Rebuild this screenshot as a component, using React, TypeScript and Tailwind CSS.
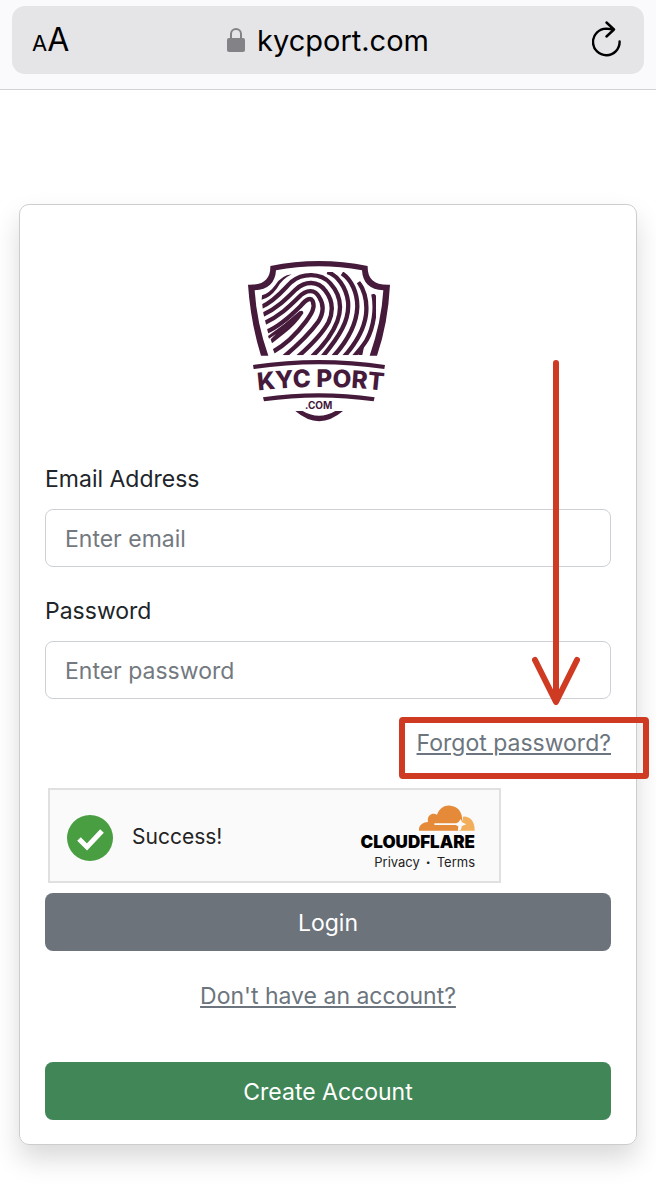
import { useState } from 'react';

const fieldClass =
  'block w-full h-[58px] px-[19px] pt-0.5 rounded-lg border border-[#cdd1d6] bg-white text-[23px] text-[#212529] placeholder:text-[#73797f] placeholder:opacity-100 outline-none focus:border-[#86b7fe]';

const ridges = [
  'M14 118 C62 96 84 62 106 42 C140 14 194 14 223 46 C250 76 260 116 244 160 C228 202 200 236 166 268',
  'M18 142 C62 122 94 90 120 64 C148 38 186 38 208 68 C228 94 234 126 218 162 C198 200 162 234 126 266',
  'M24 166 C70 144 98 118 128 88 C152 62 178 64 190 88 C204 110 204 134 186 162 C160 198 124 232 84 266',
  'M30 192 C70 176 104 144 134 114 C152 92 164 88 170 99 C178 118 168 136 150 160 C126 192 92 228 50 252',
  'M214 12 C244 22 270 56 276 100 C282 156 250 206 198 268',
  'M258 16 C288 36 304 76 304 116 C302 172 274 220 230 268',
  'M308 42 C328 72 334 106 330 140 C324 186 300 226 262 268',
  'M352 78 C361 118 354 176 332 216 C320 236 308 248 292 268',
];

function ShieldLogo() {
  return (
    <svg viewBox="0 0 498 540" className="w-[166px]" role="img" aria-label="KYC Port">
      <defs>
        <clipPath id="ridge-area">
          <path d="M76 66 H350 L384 108 L420 136 V316 H118 L106 286 L94 240 L82 190 L76 140 Z" />
        </clipPath>
        <path id="name-arc" d="M40 425 Q252 397 468 425" />
      </defs>
      <g fill="#451a3b">
        <path d="M36 104 C84 106 104 86 103 48 Q248 18 395 48 C394 86 414 106 462 104 Q456 220 423 317 H401 Q436 218 442 121 C402 120 380 98 378 61 Q248 36 120 61 C118 98 96 120 56 121 Q62 218 97 317 H75 Q44 218 36 104 Z" />
        <path d="M51 345 Q248 315 447 345 L445 357 Q248 328 53 357 Z" />
        <path d="M81 442 Q248 418 416 442 L413 454 Q248 431 84 454 Z" />
        <path d="M178 483 H200 Q249 512 298 483 H321 Q249 544 178 483 Z" />
        <path d="M78 136 Q100 130 118 105 Q137 76 167 73 Q138 87 123 115 Q102 144 77 149 Z" />
        <path d="M376 292 L384 290 L379 315 H367 Z" />
        <path d="M96 258 Q146 224 190 184 Q203 178 202 190 Q180 224 146 250 L108 280 L104 268 L120 252 L99 266 Z" />
      </g>
      <g clipPath="url(#ridge-area)">
        <g transform="translate(60 54)" fill="none" stroke="#451a3b" strokeWidth="13">
          {ridges.map((d) => (
            <path key={d} d={d} />
          ))}
        </g>
      </g>
      <text fill="#451a3b" fontSize="73" className="font-['Inter',sans-serif] font-extrabold">
        <textPath href="#name-arc" startOffset="50%" textAnchor="middle">
          KYC PORT
        </textPath>
      </text>
      <text x="248" y="477" textAnchor="middle" fill="#451a3b" fontSize="30" className="font-['Inter',sans-serif] font-bold">
        .COM
      </text>
    </svg>
  );
}

function CloudMark() {
  return (
    <svg viewBox="0 0 168 80" className="w-14" aria-hidden="true">
      <path
        fill="#e58a38"
        d="M0 77 C-2 62 10 52 27 51 C23 32 39 21 54 29 C62 8 78 0 94 2 C116 3 129 22 129 38 C130 47 127 55 123 59 C119 66 119 71 117 77 Z"
      />
      <path fill="#f2ae5b" d="M132 35 C151 33 168 47 167 77 H121 C123 71 124 66 123 57 C129 51 132 43 132 35 Z" />
      <path
        fill="#fafafa"
        d="M46 55 H112 L119 51 L125 42 L129 52 L142 58 L129 63 L125 76 H117 L118 64 L110 60 H46 Z"
      />
    </svg>
  );
}

function AddressBar() {
  return (
    <header className="border-b border-[#d2d2d4] bg-[#fafafc] px-3 pt-1.5 pb-[15px]">
      <div className="flex h-[68px] items-center justify-between rounded-[13px] bg-[#e5e5e7] px-5 text-black">
        <button type="button" aria-label="Text size" className="flex w-10 items-baseline leading-none">
          <span className="text-[22px] leading-none">A</span>
          <span className="text-[32px] leading-none">A</span>
        </button>
        <div className="flex items-center gap-3">
          <svg viewBox="0 0 18 26" className="w-[18px]" aria-hidden="true">
            <path d="M4 12 V7 A5 5 0 0 1 14 7 V12" fill="none" stroke="#838387" strokeWidth="2" />
            <rect y="11" width="18" height="14" rx="2" fill="#838387" />
          </svg>
          <span className="text-[29px] leading-none">kycport.com</span>
        </div>
        <button type="button" aria-label="Reload" className="flex w-10 justify-end">
          <svg
            viewBox="0 0 32 38"
            className="w-8"
            fill="none"
            stroke="#000"
            strokeWidth="2.4"
            strokeLinecap="round"
            strokeLinejoin="round"
          >
            <path d="M27.600 20.500 A13.300 13.300 0 1 1 14.300 7.600 L22 8.500 M14.500 1.500 L22 8.500 L14.500 15.500" />
          </svg>
        </button>
      </div>
    </header>
  );
}

function Verification() {
  return (
    <div className="ml-[3px] flex h-[95px] max-w-[453px] items-center justify-between border-2 border-[#e0e0e0] bg-[#fafafa] pr-6 pl-[17px]">
      <div className="flex items-center gap-[19px]">
        <svg viewBox="0 0 46 46" className="mt-1 w-[46px]" aria-hidden="true">
          <circle cx="23" cy="23" r="23" fill="#489e40" />
          <path d="M12 24 L20 32 L35 16" fill="none" stroke="#fff" strokeWidth="5" />
        </svg>
        <span className="pt-0.5 text-[21px] text-[#232323]">Success!</span>
      </div>
      <div className="flex flex-col items-end pt-1 text-black">
        <CloudMark />
        <span className="mt-0.5 text-[17px] leading-4 font-black">CLOUDFLARE</span>
        <div className="mt-1 flex gap-1.5 text-[13px] leading-4 text-[#232323]">
          <a href="#privacy">Privacy</a>
          <span className="font-black">·</span>
          <a href="#terms">Terms</a>
        </div>
      </div>
    </div>
  );
}

export default function App() {
  const [email, setEmail] = useState('');
  const [password, setPassword] = useState('');

  return (
    <div className="min-h-screen bg-white font-['Inter',sans-serif]">
      <AddressBar />
      <main className="px-[19px] pt-[114px] pb-[54px]">
        <form
          onSubmit={(e) => e.preventDefault()}
          className="rounded-[10px] border border-[#cccdce] px-[25px] pt-[45px] pb-6 text-[23px] shadow-[0_14px_27px_rgba(0,0,0,0.15)]"
        >
          <div className="flex justify-center pr-[18px]">
            <ShieldLogo />
          </div>

          <label htmlFor="email" className="mt-[31px] mb-3 block leading-9 text-[#212529]">
            Email Address
          </label>
          <input
            id="email"
            type="email"
            placeholder="Enter email"
            value={email}
            onChange={(e) => setEmail(e.target.value)}
            className={fieldClass}
          />

          <label htmlFor="password" className="mt-[26px] mb-3 block leading-9 text-[#212529]">
            Password
          </label>
          <div className="relative">
            <input
              id="password"
              type="password"
              placeholder="Enter password"
              value={password}
              onChange={(e) => setPassword(e.target.value)}
              className={fieldClass}
            />
            <svg
              viewBox="0 0 48 348"
              className="pointer-events-none absolute right-[31px] -bottom-2 w-12"
              fill="none"
              stroke="#cf3a22"
              strokeWidth="6"
              strokeLinecap="round"
              strokeLinejoin="round"
              aria-hidden="true"
            >
              <path d="M24 4 V342 M3 301 L24 343 L45 301" />
            </svg>
          </div>

          <div className="mt-[26px] mb-[27px] flex justify-end">
            <div className="relative">
              <a href="#forgot" className="block leading-9 text-[#6c757d] underline">
                Forgot password?
              </a>
              <div className="pointer-events-none absolute -top-2 -right-[38px] -bottom-[18px] -left-[18px] rounded-[4px] border-6 border-[#cf3a22]" />
            </div>
          </div>

          <Verification />

          <button type="submit" className="mt-2.5 block h-[58px] w-full rounded-lg bg-[#6c737b] pt-0.5 text-white">
            Login
          </button>
          <div className="mt-[27px] flex justify-center">
            <a href="#register" className="leading-9 text-[#6c757d] underline">
              Don't have an account?
            </a>
          </div>
          <button type="button" className="mt-12 block h-[58px] w-full rounded-lg bg-[#418657] pt-0.5 text-white">
            Create Account
          </button>
        </form>
      </main>
    </div>
  );
}
